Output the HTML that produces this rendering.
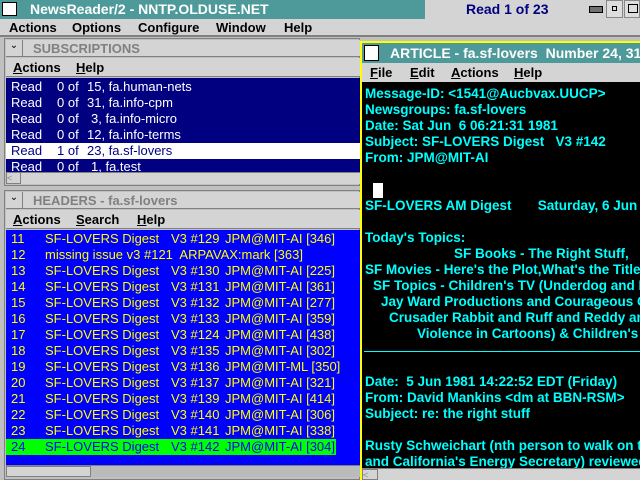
<!DOCTYPE html>
<html><head><style>
*{margin:0;padding:0;box-sizing:border-box}
body{width:640px;height:480px;overflow:hidden;background:#c0c0c0;font-family:"Liberation Sans",sans-serif;position:relative}
.a{position:absolute;white-space:pre}
.teal{background:#4e9a9a}
.mb{font-size:13px;font-weight:bold;color:#000;line-height:17px}
.row{position:absolute;left:0;width:354px;height:16px;font-size:13px;line-height:16px;white-space:pre}
.row span{position:absolute;top:0}
.cy{color:#00ffff;font-size:13.5px;font-weight:bold;line-height:16px;position:absolute;left:3px;white-space:pre}
u{text-decoration:underline}
</style></head><body>
<div class="a teal" style="left:0;top:0;width:425px;height:19px"></div>
<div class="a" style="left:2px;top:2px;width:15px;height:14px;background:#fff;border:1px solid #000"></div>
<div class="a" style="left:30px;top:1px;font-size:14px;font-weight:bold;color:#fff;line-height:17px">NewsReader/2 - NNTP.OLDUSE.NET</div>
<div class="a" style="left:425px;top:0;width:215px;height:19px;background:#d4d4d4"></div>
<div class="a" style="left:466px;top:1px;font-size:14px;font-weight:bold;color:#000080;line-height:17px">Read 1 of 23</div>
<div class="a" style="left:589px;top:6px;width:14px;height:7px;background:#707070;border:1px solid #000"></div>
<div class="a" style="left:606px;top:0;width:17px;height:18px;border:1px solid #888;background:#ddd"></div>
<div class="a" style="left:612px;top:6px;width:5px;height:5px;border:1px solid #000"></div>
<div class="a" style="left:624px;top:0;width:16px;height:18px;border:1px solid #888;background:#ddd"></div>
<div class="a" style="left:628px;top:4px;width:10px;height:9px;border:1px solid #000"></div>
<div class="a" style="left:0;top:19px;width:640px;height:18px;background:#d4d4d4;border-bottom:2px solid #808080"></div>
<div class="a mb" style="left:9px;top:19px">Actions</div>
<div class="a mb" style="left:72px;top:19px">Options</div>
<div class="a mb" style="left:138px;top:19px">Configure</div>
<div class="a mb" style="left:216px;top:19px">Window</div>
<div class="a mb" style="left:284px;top:19px">Help</div>
<!-- subscriptions -->
<div class="a" style="left:4px;top:38px;width:356px;height:148px;background:#c0c0c0;border:1px solid #808080"></div>
<div class="a" style="left:6px;top:40px;width:354px;height:17px;background:#d4d4d4;border-bottom:1px solid #808080"></div>
<div class="a" style="left:6px;top:40px;width:17px;height:17px;border-right:1px solid #808080;font-size:10px;text-align:center">⌄</div>
<div class="a" style="left:33px;top:40px;font-size:13px;font-weight:bold;color:#808080;line-height:17px">SUBSCRIPTIONS</div>
<div class="a" style="left:6px;top:58px;width:354px;height:19px;background:#d4d4d4;border-bottom:1px solid #808080"></div>
<div class="a mb" style="left:13px;top:59px"><u>A</u>ctions</div>
<div class="a mb" style="left:76px;top:59px"><u>H</u>elp</div>
<div class="a" style="left:6px;top:78px;width:354px;height:94px;background:#000080;overflow:hidden">
<div class="row" style="top:1px;color:#fff"><span style="left:5px">Read</span><span style="left:51px">0 of</span><span style="left:81px">15, fa.human-nets</span></div>
<div class="row" style="top:17px;color:#fff"><span style="left:5px">Read</span><span style="left:51px">0 of</span><span style="left:81px">31, fa.info-cpm</span></div>
<div class="row" style="top:33px;color:#fff"><span style="left:5px">Read</span><span style="left:51px">0 of</span><span style="left:85px">3, fa.info-micro</span></div>
<div class="row" style="top:49px;color:#fff"><span style="left:5px">Read</span><span style="left:51px">0 of</span><span style="left:81px">12, fa.info-terms</span></div>
<div class="row" style="top:65px;color:#000080;background:#fff"><span style="left:5px">Read</span><span style="left:51px">1 of</span><span style="left:81px">23, fa.sf-lovers</span></div>
<div class="row" style="top:81px;color:#fff"><span style="left:5px">Read</span><span style="left:51px">0 of</span><span style="left:85px">1, fa.test</span></div>
</div>
<div class="a" style="left:6px;top:172px;width:354px;height:12px;background:#d4d4d4;border-top:1px solid #808080"></div>
<div class="a" style="left:6px;top:172px;width:15px;height:12px;border:1px solid #808080;font-size:9px;color:#888">&lt;</div>
<!-- headers -->
<div class="a" style="left:4px;top:190px;width:356px;height:290px;background:#c0c0c0;border:1px solid #808080"></div>
<div class="a" style="left:6px;top:192px;width:354px;height:17px;background:#d4d4d4;border-bottom:1px solid #808080"></div>
<div class="a" style="left:6px;top:192px;width:17px;height:17px;border-right:1px solid #808080;font-size:10px;text-align:center">⌄</div>
<div class="a" style="left:33px;top:192px;font-size:13px;font-weight:bold;color:#808080;line-height:17px">HEADERS - fa.sf-lovers</div>
<div class="a" style="left:6px;top:210px;width:354px;height:19px;background:#d4d4d4;border-bottom:1px solid #808080"></div>
<div class="a mb" style="left:13px;top:211px"><u>A</u>ctions</div>
<div class="a mb" style="left:76px;top:211px"><u>S</u>earch</div>
<div class="a mb" style="left:137px;top:211px"><u>H</u>elp</div>
<div class="a" style="left:6px;top:230px;width:354px;height:235px;background:#0000ff;overflow:hidden;color:#ffff00">
<div class="row" style="top:1px"><span style="left:5px">11</span><span style="left:39px">SF-LOVERS Digest</span><span style="left:165px">V3 #129</span><span style="left:219px">JPM@MIT-AI [346]</span></div>
<div class="row" style="top:17px"><span style="left:5px">12</span><span style="left:39px">missing issue v3 #121  ARPAVAX:mark [363]</span></div>
<div class="row" style="top:33px"><span style="left:5px">13</span><span style="left:39px">SF-LOVERS Digest</span><span style="left:165px">V3 #130</span><span style="left:219px">JPM@MIT-AI [225]</span></div>
<div class="row" style="top:49px"><span style="left:5px">14</span><span style="left:39px">SF-LOVERS Digest</span><span style="left:165px">V3 #131</span><span style="left:219px">JPM@MIT-AI [361]</span></div>
<div class="row" style="top:65px"><span style="left:5px">15</span><span style="left:39px">SF-LOVERS Digest</span><span style="left:165px">V3 #132</span><span style="left:219px">JPM@MIT-AI [277]</span></div>
<div class="row" style="top:81px"><span style="left:5px">16</span><span style="left:39px">SF-LOVERS Digest</span><span style="left:165px">V3 #133</span><span style="left:219px">JPM@MIT-AI [359]</span></div>
<div class="row" style="top:97px"><span style="left:5px">17</span><span style="left:39px">SF-LOVERS Digest</span><span style="left:165px">V3 #124</span><span style="left:219px">JPM@MIT-AI [438]</span></div>
<div class="row" style="top:113px"><span style="left:5px">18</span><span style="left:39px">SF-LOVERS Digest</span><span style="left:165px">V3 #135</span><span style="left:219px">JPM@MIT-AI [302]</span></div>
<div class="row" style="top:129px"><span style="left:5px">19</span><span style="left:39px">SF-LOVERS Digest</span><span style="left:165px">V3 #136</span><span style="left:219px">JPM@MIT-ML [350]</span></div>
<div class="row" style="top:145px"><span style="left:5px">20</span><span style="left:39px">SF-LOVERS Digest</span><span style="left:165px">V3 #137</span><span style="left:219px">JPM@MIT-AI [321]</span></div>
<div class="row" style="top:161px"><span style="left:5px">21</span><span style="left:39px">SF-LOVERS Digest</span><span style="left:165px">V3 #139</span><span style="left:219px">JPM@MIT-AI [414]</span></div>
<div class="row" style="top:177px"><span style="left:5px">22</span><span style="left:39px">SF-LOVERS Digest</span><span style="left:165px">V3 #140</span><span style="left:219px">JPM@MIT-AI [306]</span></div>
<div class="row" style="top:193px"><span style="left:5px">23</span><span style="left:39px">SF-LOVERS Digest</span><span style="left:165px">V3 #141</span><span style="left:219px">JPM@MIT-AI [338]</span></div>
<div class="row" style="top:209px;background:#00ff00;color:#0000ff;width:330px"><span style="left:5px">24</span><span style="left:39px">SF-LOVERS Digest</span><span style="left:165px">V3 #142</span><span style="left:219px">JPM@MIT-AI [304]</span></div>
</div>
<div class="a" style="left:6px;top:465px;width:354px;height:12px;background:#bbb;border-top:1px solid #808080"></div>
<div class="a" style="left:6px;top:466px;width:85px;height:11px;background:#d4d4d4;border:1px solid #808080"></div>
<!-- article -->
<div class="a" style="left:360px;top:41px;width:280px;height:439px;background:#fff;border:2px solid #ffff00;border-right:none"></div>
<div class="a teal" style="left:362px;top:43px;width:278px;height:20px"></div>
<div class="a" style="left:364px;top:45px;width:15px;height:16px;background:#fff;border:1px solid #000"></div>
<div class="a" style="left:390px;top:44px;font-size:14px;font-weight:bold;color:#fff;line-height:18px">ARTICLE - fa.sf-lovers  Number 24, 311</div>
<div class="a" style="left:362px;top:63px;width:278px;height:19px;background:#d4d4d4"></div>
<div class="a mb" style="left:370px;top:64px"><u>F</u>ile</div>
<div class="a mb" style="left:410px;top:64px"><u>E</u>dit</div>
<div class="a mb" style="left:451px;top:64px"><u>A</u>ctions</div>
<div class="a mb" style="left:514px;top:64px"><u>H</u>elp</div>
<div class="a" style="left:362px;top:82px;width:278px;height:386px;background:#000;overflow:hidden">
<div class="cy" style="top:4px">Message-ID: &lt;1541@Aucbvax.UUCP&gt;</div>
<div class="cy" style="top:20px">Newsgroups: fa.sf-lovers</div>
<div class="cy" style="top:36px">Date: Sat Jun  6 06:21:31 1981</div>
<div class="cy" style="top:52px">Subject: SF-LOVERS Digest   V3 #142</div>
<div class="cy" style="top:68px">From: JPM@MIT-AI</div>
<div class="a" style="left:11px;top:101px;width:10px;height:15px;background:#fff"></div>
<div class="cy" style="top:116px">SF-LOVERS AM Digest       Saturday, 6 Jun 1981</div>
<div class="cy" style="top:148px">Today's Topics:</div>
<div class="cy" style="top:164px;left:92px">SF Books - The Right Stuff,</div>
<div class="cy" style="top:180px">SF Movies - Here's the Plot,What's the Title</div>
<div class="cy" style="top:196px;left:11px">SF Topics - Children's TV (Underdog and K</div>
<div class="cy" style="top:212px;left:19px">Jay Ward Productions and Courageous C</div>
<div class="cy" style="top:228px;left:27px">Crusader Rabbit and Ruff and Reddy and</div>
<div class="cy" style="top:244px;left:55px">Violence in Cartoons) &amp; Children's</div>
<div class="a" style="left:2px;top:269px;width:276px;height:1px;background:#00ffff"></div>
<div class="cy" style="top:292px">Date:  5 Jun 1981 14:22:52 EDT (Friday)</div>
<div class="cy" style="top:308px">From: David Mankins &lt;dm at BBN-RSM&gt;</div>
<div class="cy" style="top:324px">Subject: re: the right stuff</div>
<div class="cy" style="top:356px">Rusty Schweichart (nth person to walk on the</div>
<div class="cy" style="top:372px">and California's Energy Secretary) reviewed</div>
</div>
<div class="a" style="left:362px;top:468px;width:278px;height:12px;background:#d4d4d4;border-top:1px solid #808080"></div>
<div class="a" style="left:362px;top:469px;width:16px;height:11px;border:1px solid #808080;font-size:9px;color:#888">&lt;</div>
</body></html>
